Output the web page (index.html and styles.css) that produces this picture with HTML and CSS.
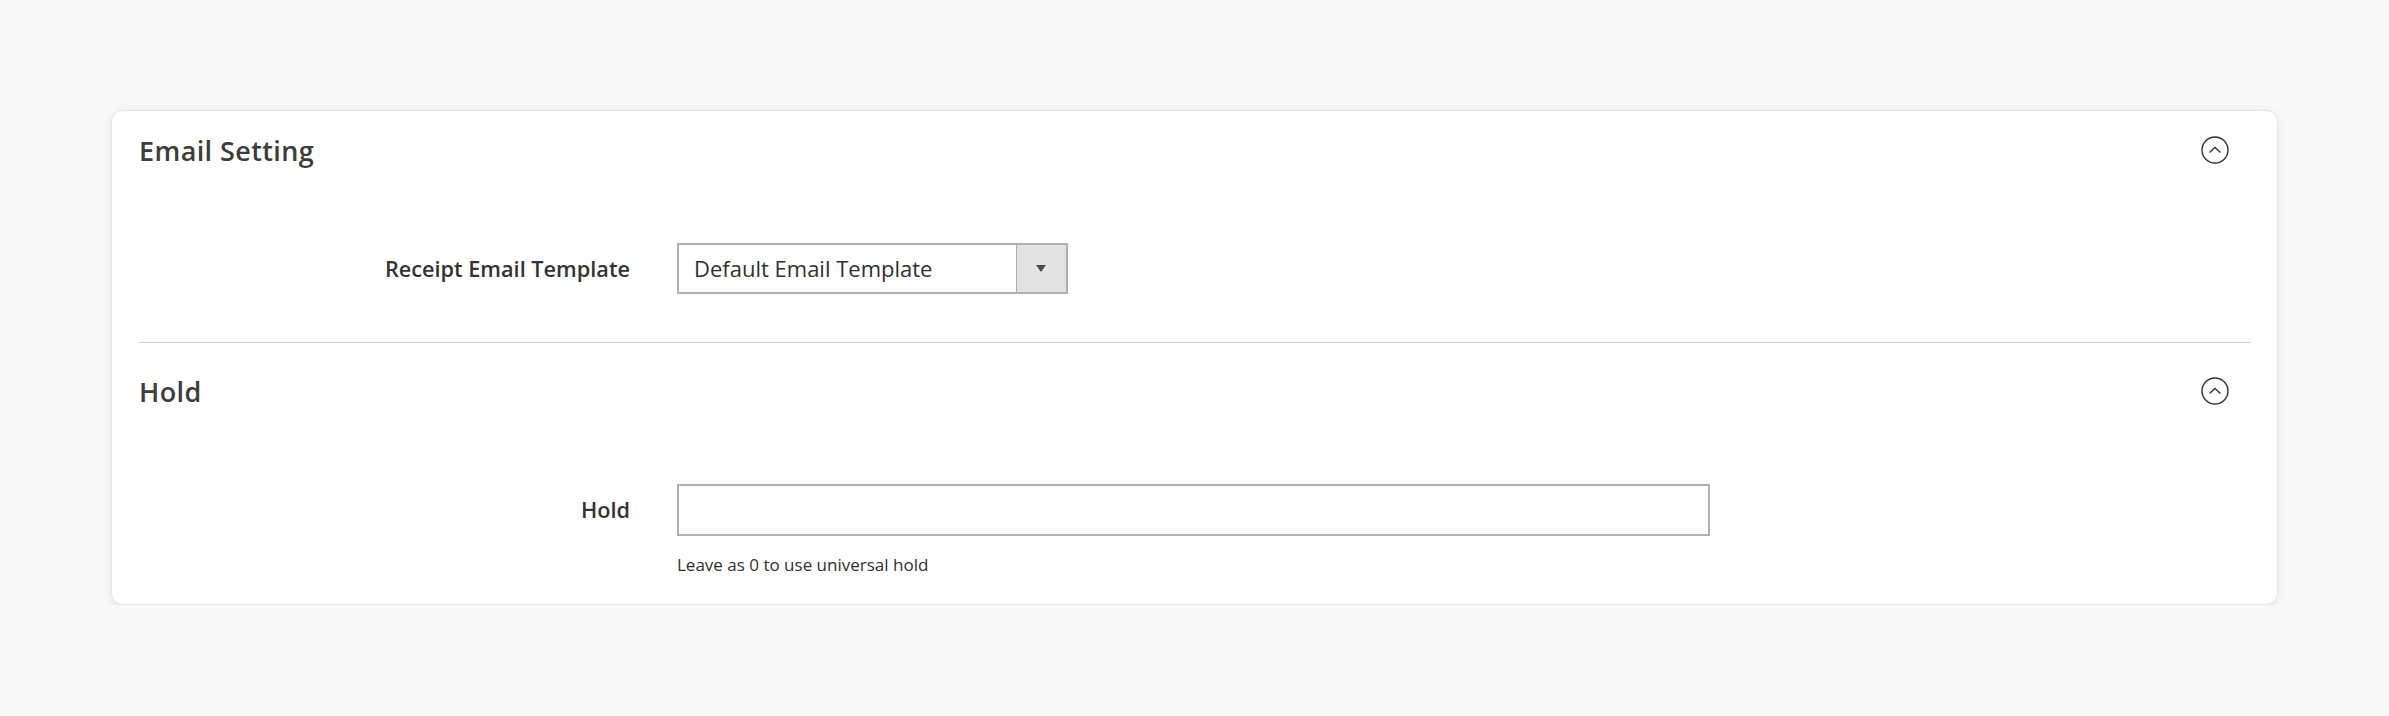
FILE: index.html
```html
<!DOCTYPE html>
<html lang="en">
<head>
    <meta charset="UTF-8">
    <meta name="viewport" content="width=device-width, initial-scale=1">
    <title>Email Setting</title>
    <link rel="stylesheet" href="styles.css">
</head>
<body>

<main class="card">
    <section class="fieldset first">
        <div class="fieldset-head">
            <h2>Email Setting</h2>
            <svg class="toggle" width="28" height="28" viewBox="0 0 28 28">
                <circle cx="14" cy="14" r="13" fill="none" stroke="#333" stroke-width="1.4"/>
                <polyline points="8.5,16.5 14,11.5 19.5,16.5" fill="none" stroke="#333" stroke-width="1.4"/>
            </svg>
        </div>
        <div class="field">
            <label>Receipt Email Template</label>
            <div class="control">
                <div class="select">
                    <span class="select-value">Default Email Template</span>
                    <span class="select-arrow"></span>
                </div>
            </div>
        </div>
    </section>
    <section class="fieldset second">
        <div class="fieldset-head">
            <h2>Hold</h2>
            <svg class="toggle" width="28" height="28" viewBox="0 0 28 28">
                <circle cx="14" cy="14" r="13" fill="none" stroke="#333" stroke-width="1.4"/>
                <polyline points="8.5,16.5 14,11.5 19.5,16.5" fill="none" stroke="#333" stroke-width="1.4"/>
            </svg>
        </div>
        <div class="field">
            <label>Hold</label>
            <div class="control">
                <input type="text" class="text-input">
                <div class="note">Leave as 0 to use universal hold</div>
            </div>
        </div>
    </section>
</main>

</body>
</html>
```

FILE: styles.css
```css
body {
    margin: 0;
    font-family: "Open Sans", "Noto Sans", sans-serif;
    background-color: #f8f8f8;
    color: #303030;
}
.card {
    box-sizing: border-box;
    width: 2167px;
    margin: 110px auto 0;
    padding: 0 27px 26px;
    background-color: white;
    border: 1px solid #e6e6e6;
    border-radius: 12px;
    box-shadow: 0 2px 10px rgba(0, 0, 0, 0.07);
}
.fieldset-head {
    display: flex;
    justify-content: space-between;
    align-items: center;
    height: 78px;
}
.fieldset-head h2 {
    margin: 0;
    font-size: 27px;
    font-weight: 600;
    color: #3d3d3d;
    letter-spacing: 0.4px;
}
.toggle {
    margin-right: 21px;
}
.first {
    padding-bottom: 48px;
    border-bottom: 1px solid #d0d0d0;
}
.second .fieldset-head {
    margin-top: 9px;
}
.field {
    display: grid;
    grid-template-columns: 491px 1fr;
    grid-gap: 47px;
    margin-top: 54px;
}
.field label {
    text-align: right;
    font-size: 21.7px;
    font-weight: 600;
    line-height: 51px;
    color: #333;
}
.select {
    display: flex;
    box-sizing: border-box;
    width: 391px;
    height: 51px;
    border: 2px solid #b0b0b0;
    font-size: 22px;
}
.select-value {
    flex: 1;
    padding-left: 15px;
    line-height: 47px;
}
.select-arrow {
    position: relative;
    width: 49px;
    background-color: #e3e3e3;
    border-left: 1px solid #b0b0b0;
}
.select-arrow::after {
    content: "";
    position: absolute;
    left: 19px;
    top: 20px;
    border-left: 5px solid transparent;
    border-right: 5px solid transparent;
    border-top: 7px solid #514943;
}
.text-input {
    display: block;
    box-sizing: border-box;
    width: 1033px;
    height: 52px;
    margin: 0;
    border: 2px solid #b0b0b0;
    font-family: inherit;
    font-size: 21px;
}
.note {
    margin-top: 15px;
    font-size: 17px;
    line-height: 27px;
    color: #303030;
}
```
